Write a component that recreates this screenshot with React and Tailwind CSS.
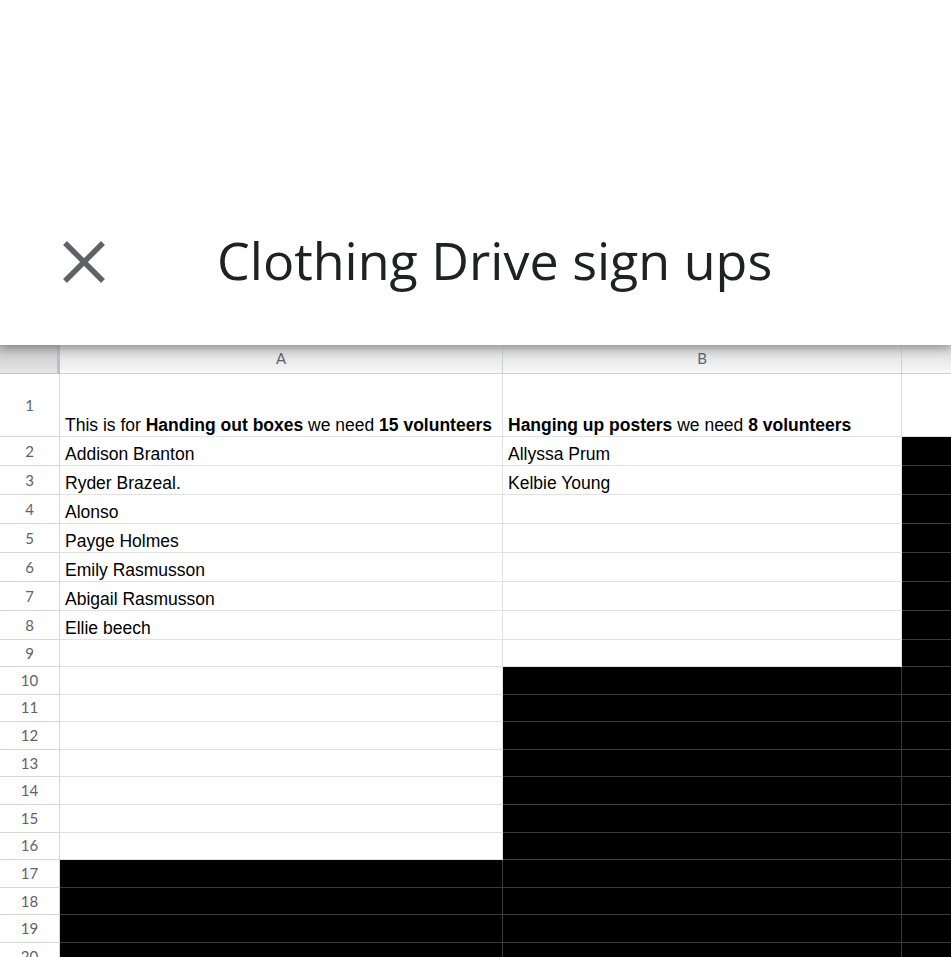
import React from 'react';

const signUps = [
  ['Addison Branton', 'Allyssa Prum'],
  ['Ryder Brazeal.', 'Kelbie Young'],
  ['Alonso', ''],
  ['Payge Holmes', ''],
  ['Emily Rasmusson', ''],
  ['Abigail Rasmusson', ''],
  ['Ellie beech', ''],
];

const rowNumFont = { fontFamily: 'Lato, "Open Sans", sans-serif' };

const Cell = ({ dark, width, children, last }) => (
  <div
    className={
      (width ? width + ' shrink-0 ' : 'flex-1 ') +
      'flex items-end px-[5px] pb-[1px] leading-[20px] overflow-hidden whitespace-nowrap border-b ' +
      (last ? '' : 'border-r ') +
      (dark ? 'bg-black border-[#3a3a3a]' : 'bg-white border-[#e2e2e2]')
    }
  >
    {children}
  </div>
);

const Row = ({ num, height, a, b, darkA, darkB, darkC }) => (
  <div className={'flex shrink-0 ' + height}>
    <div
      className="w-[60px] shrink-0 flex items-center justify-center border-r border-b border-[#d6d6d6] bg-white text-[15px] leading-none text-[#5f6368]"
      style={rowNumFont}
    >
      {num}
    </div>
    <Cell width="w-[443px]" dark={darkA}>{a}</Cell>
    <Cell width="w-[399px]" dark={darkB}>{b}</Cell>
    <Cell dark={darkC} last />
  </div>
);

export default function App() {
  const rows = [];
  signUps.forEach((pair, i) => {
    rows.push({ num: i + 2, height: 'h-[29px]', a: pair[0], b: pair[1] });
  });
  rows.push({ num: 9, height: 'h-[27px]', a: '', b: '' });
  for (let n = 10; n <= 20; n++) {
    rows.push({ num: n, height: 'h-[27.6px]', a: '', b: '', darkA: n >= 17, darkB: true });
  }

  return (
    <div className="w-[951px] h-[957px] overflow-hidden bg-white flex flex-col">
      <header className="relative z-10 h-[345px] shrink-0 bg-white flex items-center pt-[178px] shadow-[0_3px_10px_rgba(0,0,0,0.35)]">
        <div className="w-[217px] shrink-0 flex items-center pl-[61px]">
          <svg width="46" height="46" viewBox="0 0 46 46">
            <path d="M4 4 L42 42 M42 4 L4 42" stroke="#5f6368" strokeWidth="5.5" strokeLinecap="butt" />
          </svg>
        </div>
        <h1
          className="text-[52px] text-[#202124] leading-none -mt-[4px]"
          style={{ fontFamily: '"Open Sans", Roboto, sans-serif' }}
        >
          Clothing Drive sign ups
        </h1>
      </header>

      <div className="flex-1 flex flex-col text-[17.5px] text-black" style={{ fontFamily: '"Liberation Sans", Arial, sans-serif' }}>
        {/* column letters */}
        <div className="flex h-[29px] shrink-0 bg-gradient-to-b from-[#d9d9d9] to-[#f8f9fa] text-[15px] text-[#5f6368]" style={rowNumFont}>
          <div className="w-[60px] shrink-0 bg-gradient-to-b from-[#c4c4c4] to-[#e6e6e6] border-r-[3px] border-[#b9bfcc] border-b border-b-[#c8c8c8]" />
          <div className="w-[443px] shrink-0 flex items-end justify-center pb-[4px] border-r border-b border-[#cfcfcf]">A</div>
          <div className="w-[399px] shrink-0 flex items-end justify-center pb-[4px] border-r border-b border-[#cfcfcf]">B</div>
          <div className="flex-1 border-b border-[#cfcfcf]" />
        </div>

        <Row
          num={1}
          height="h-[63px]"
          a={<span>This is for <b>Handing out boxes</b> we need <b>15 volunteers</b></span>}
          b={<span><b>Hanging up posters</b> we need <b>8 volunteers</b></span>}
        />
        {rows.map((r) => (
          <Row key={r.num} {...r} darkC />
        ))}
      </div>
    </div>
  );
}
